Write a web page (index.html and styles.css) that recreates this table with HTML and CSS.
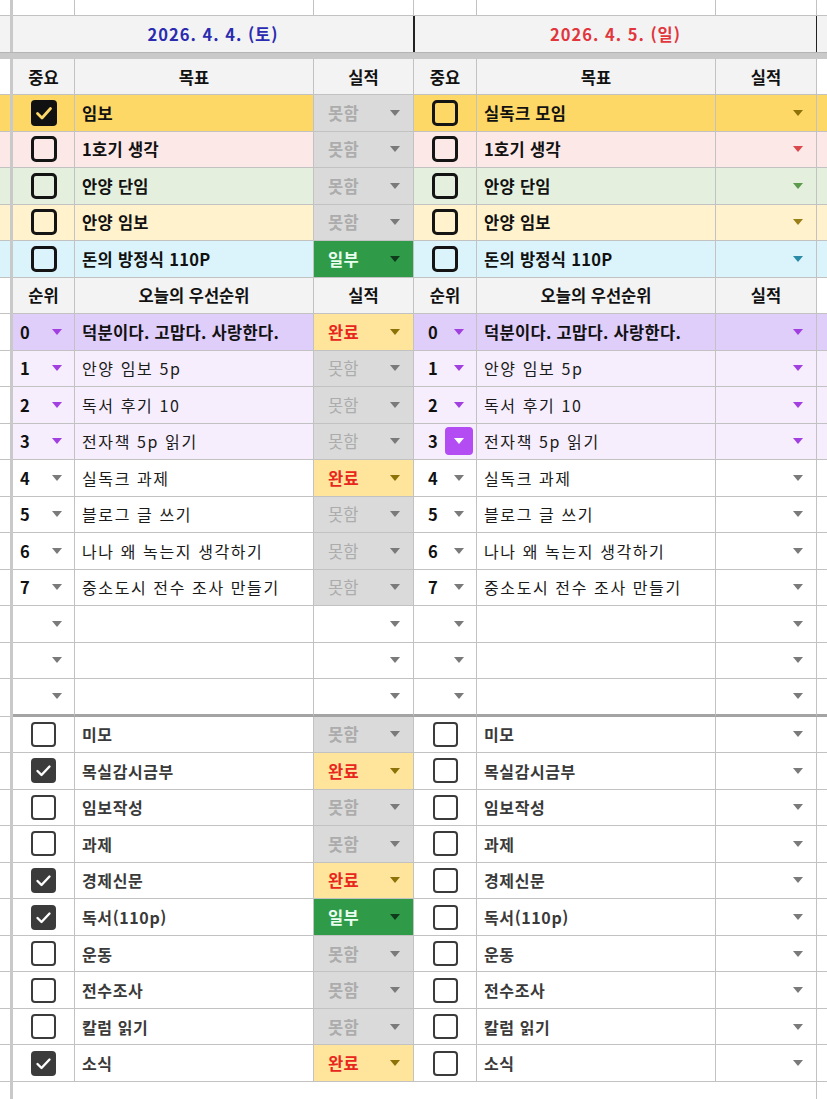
FILE: index.html
```html
<!DOCTYPE html>
<html lang="ko">
<head>
<meta charset="utf-8">
<link rel="stylesheet" href="styles.css">
<title>Planner</title>
</head>
<body>
<div class="sheet">
  <!-- top partial row -->
  <div class="c s"></div><div class="v"></div>
  <div class="c"></div><div class="c"></div><div class="c"></div><div class="c"></div><div class="c"></div><div class="c"></div><div class="c g"></div>

  <!-- date row -->
  <div class="c s dt"></div><div class="v"></div>
  <div class="c date sat">2026. 4. 4. (토)</div>
  <div class="c date sun">2026. 4. 5. (일)</div>
  <div class="c g dt"></div>

  <!-- frozen band -->
  <div class="band"></div>

  <!-- goal header -->
  <div class="c s"></div><div class="v"></div>
  <div class="c h">중요</div><div class="c h">목표</div><div class="c h">실적</div>
  <div class="c h">중요</div><div class="c h">목표</div><div class="c h">실적</div>
  <div class="c g"></div>

  <!-- goals -->
  <div class="c s ry"></div><div class="v"></div>
  <div class="c ck ry"><svg class="cbx" viewBox="0 0 26 26"><rect x="0" y="0" width="26" height="26" rx="4" fill="#111"/><path d="M6.5 13.5 L11 18 L19.5 8.5" fill="none" stroke="#fed867" stroke-width="2.8" stroke-linecap="round" stroke-linejoin="round"/></svg></div>
  <div class="c t b ry">임보</div>
  <div class="c st no b">못함<i class="ar"></i></div>
  <div class="c ck ry"><span class="cb"></span></div>
  <div class="c t b ry">실독크 모임</div>
  <div class="c st e ry"><i class="ar a-ol"></i></div>
  <div class="c g ry"></div>

  <div class="c s rp"></div><div class="v"></div>
  <div class="c ck rp"><span class="cb"></span></div>
  <div class="c t b rp">1호기 생각</div>
  <div class="c st no b">못함<i class="ar"></i></div>
  <div class="c ck rp"><span class="cb"></span></div>
  <div class="c t b rp">1호기 생각</div>
  <div class="c st e rp"><i class="ar a-red"></i></div>
  <div class="c g rp"></div>

  <div class="c s rg"></div><div class="v"></div>
  <div class="c ck rg"><span class="cb"></span></div>
  <div class="c t b rg">안양 단임</div>
  <div class="c st no b">못함<i class="ar"></i></div>
  <div class="c ck rg"><span class="cb"></span></div>
  <div class="c t b rg">안양 단임</div>
  <div class="c st e rg"><i class="ar a-grn"></i></div>
  <div class="c g rg"></div>

  <div class="c s rl"></div><div class="v"></div>
  <div class="c ck rl"><span class="cb"></span></div>
  <div class="c t b rl">안양 임보</div>
  <div class="c st no b">못함<i class="ar"></i></div>
  <div class="c ck rl"><span class="cb"></span></div>
  <div class="c t b rl">안양 임보</div>
  <div class="c st e rl"><i class="ar a-ol2"></i></div>
  <div class="c g rl"></div>

  <div class="c s rc"></div><div class="v"></div>
  <div class="c ck rc"><span class="cb"></span></div>
  <div class="c t b rc">돈의 방정식 110P</div>
  <div class="c st pt b">일부<i class="ar a-dk"></i></div>
  <div class="c ck rc"><span class="cb"></span></div>
  <div class="c t b rc">돈의 방정식 110P</div>
  <div class="c st e rc"><i class="ar a-cy"></i></div>
  <div class="c g rc"></div>

  <!-- priority header -->
  <div class="c s"></div><div class="v"></div>
  <div class="c h">순위</div><div class="c h">오늘의 우선순위</div><div class="c h">실적</div>
  <div class="c h">순위</div><div class="c h">오늘의 우선순위</div><div class="c h">실적</div>
  <div class="c g"></div>

  <!-- priorities -->
  <div class="c s"></div><div class="v"></div>
  <div class="c n lv0">0<i class="ar a-pu"></i></div>
  <div class="c t b lv0">덕분이다. 고맙다. 사랑한다.</div>
  <div class="c st ok b">완료<i class="ar a-ol"></i></div>
  <div class="c n nr lv0">0<i class="ar a-pu"></i></div>
  <div class="c t b lv0">덕분이다. 고맙다. 사랑한다.</div>
  <div class="c st e lv0"><i class="ar a-pu"></i></div>
  <div class="c g lv0"></div>

  <div class="c s"></div><div class="v"></div>
  <div class="c n lv1">1<i class="ar a-pu"></i></div>
  <div class="c t r lv1">안양 임보 5p</div>
  <div class="c st no">못함<i class="ar"></i></div>
  <div class="c n nr lv1">1<i class="ar a-pu"></i></div>
  <div class="c t r lv1">안양 임보 5p</div>
  <div class="c st e lv1"><i class="ar a-pu"></i></div>
  <div class="c g lv1"></div>

  <div class="c s"></div><div class="v"></div>
  <div class="c n lv1">2<i class="ar a-pu"></i></div>
  <div class="c t r lv1">독서 후기 10</div>
  <div class="c st no">못함<i class="ar"></i></div>
  <div class="c n nr lv1">2<i class="ar a-pu"></i></div>
  <div class="c t r lv1">독서 후기 10</div>
  <div class="c st e lv1"><i class="ar a-pu"></i></div>
  <div class="c g lv1"></div>

  <div class="c s"></div><div class="v"></div>
  <div class="c n lv1">3<i class="ar a-pu"></i></div>
  <div class="c t r lv1">전자책 5p 읽기</div>
  <div class="c st no">못함<i class="ar"></i></div>
  <div class="c n nr lv1">3<span class="chip"><i class="ar a-wh"></i></span></div>
  <div class="c t r lv1">전자책 5p 읽기</div>
  <div class="c st e lv1"><i class="ar a-pu"></i></div>
  <div class="c g lv1"></div>

  <div class="c s"></div><div class="v"></div>
  <div class="c n">4<i class="ar"></i></div>
  <div class="c t r">실독크 과제</div>
  <div class="c st ok b">완료<i class="ar a-ol"></i></div>
  <div class="c n nr">4<i class="ar"></i></div>
  <div class="c t r">실독크 과제</div>
  <div class="c st e"><i class="ar"></i></div>
  <div class="c g"></div>

  <div class="c s"></div><div class="v"></div>
  <div class="c n">5<i class="ar"></i></div>
  <div class="c t r">블로그 글 쓰기</div>
  <div class="c st no">못함<i class="ar"></i></div>
  <div class="c n nr">5<i class="ar"></i></div>
  <div class="c t r">블로그 글 쓰기</div>
  <div class="c st e"><i class="ar"></i></div>
  <div class="c g"></div>

  <div class="c s"></div><div class="v"></div>
  <div class="c n">6<i class="ar"></i></div>
  <div class="c t r">나나 왜 녹는지 생각하기</div>
  <div class="c st no">못함<i class="ar"></i></div>
  <div class="c n nr">6<i class="ar"></i></div>
  <div class="c t r">나나 왜 녹는지 생각하기</div>
  <div class="c st e"><i class="ar"></i></div>
  <div class="c g"></div>

  <div class="c s"></div><div class="v"></div>
  <div class="c n">7<i class="ar"></i></div>
  <div class="c t r">중소도시 전수 조사 만들기</div>
  <div class="c st no">못함<i class="ar"></i></div>
  <div class="c n nr">7<i class="ar"></i></div>
  <div class="c t r">중소도시 전수 조사 만들기</div>
  <div class="c st e"><i class="ar"></i></div>
  <div class="c g"></div>

  <div class="c s"></div><div class="v"></div>
  <div class="c n e"><i class="ar"></i></div>
  <div class="c t"></div>
  <div class="c st e"><i class="ar"></i></div>
  <div class="c n e"><i class="ar"></i></div>
  <div class="c t"></div>
  <div class="c st e"><i class="ar"></i></div>
  <div class="c g"></div>

  <div class="c s"></div><div class="v"></div>
  <div class="c n e"><i class="ar"></i></div>
  <div class="c t"></div>
  <div class="c st e"><i class="ar"></i></div>
  <div class="c n e"><i class="ar"></i></div>
  <div class="c t"></div>
  <div class="c st e"><i class="ar"></i></div>
  <div class="c g"></div>

  <div class="c s"></div><div class="v"></div>
  <div class="c n e k"><i class="ar"></i></div>
  <div class="c t k"></div>
  <div class="c st e k"><i class="ar"></i></div>
  <div class="c n e k"><i class="ar"></i></div>
  <div class="c t k"></div>
  <div class="c st e k"><i class="ar"></i></div>
  <div class="c g k"></div>

  <!-- habits -->
  <div class="c s"></div><div class="v"></div>
  <div class="c ck"><span class="cb2"></span></div>
  <div class="c t m">미모</div>
  <div class="c st no b">못함<i class="ar"></i></div>
  <div class="c ck"><span class="cb2"></span></div>
  <div class="c t m">미모</div>
  <div class="c st e"><i class="ar"></i></div>
  <div class="c g"></div>

  <div class="c s"></div><div class="v"></div>
  <div class="c ck"><svg class="cbx2" viewBox="0 0 25 25"><rect width="25" height="25" rx="4" fill="#3b3b3b"/><path d="M6.5 13 L10.5 17 L18.5 8.5" fill="none" stroke="#fff" stroke-width="2.4" stroke-linecap="round" stroke-linejoin="round"/></svg></div>
  <div class="c t m">목실감시금부</div>
  <div class="c st ok b">완료<i class="ar a-ol"></i></div>
  <div class="c ck"><span class="cb2"></span></div>
  <div class="c t m">목실감시금부</div>
  <div class="c st e"><i class="ar"></i></div>
  <div class="c g"></div>

  <div class="c s"></div><div class="v"></div>
  <div class="c ck"><span class="cb2"></span></div>
  <div class="c t m">임보작성</div>
  <div class="c st no b">못함<i class="ar"></i></div>
  <div class="c ck"><span class="cb2"></span></div>
  <div class="c t m">임보작성</div>
  <div class="c st e"><i class="ar"></i></div>
  <div class="c g"></div>

  <div class="c s"></div><div class="v"></div>
  <div class="c ck"><span class="cb2"></span></div>
  <div class="c t m">과제</div>
  <div class="c st no b">못함<i class="ar"></i></div>
  <div class="c ck"><span class="cb2"></span></div>
  <div class="c t m">과제</div>
  <div class="c st e"><i class="ar"></i></div>
  <div class="c g"></div>

  <div class="c s"></div><div class="v"></div>
  <div class="c ck"><svg class="cbx2" viewBox="0 0 25 25"><rect width="25" height="25" rx="4" fill="#3b3b3b"/><path d="M6.5 13 L10.5 17 L18.5 8.5" fill="none" stroke="#fff" stroke-width="2.4" stroke-linecap="round" stroke-linejoin="round"/></svg></div>
  <div class="c t m">경제신문</div>
  <div class="c st ok b">완료<i class="ar a-ol"></i></div>
  <div class="c ck"><span class="cb2"></span></div>
  <div class="c t m">경제신문</div>
  <div class="c st e"><i class="ar"></i></div>
  <div class="c g"></div>

  <div class="c s"></div><div class="v"></div>
  <div class="c ck"><svg class="cbx2" viewBox="0 0 25 25"><rect width="25" height="25" rx="4" fill="#3b3b3b"/><path d="M6.5 13 L10.5 17 L18.5 8.5" fill="none" stroke="#fff" stroke-width="2.4" stroke-linecap="round" stroke-linejoin="round"/></svg></div>
  <div class="c t m">독서(110p)</div>
  <div class="c st pt b">일부<i class="ar a-dk"></i></div>
  <div class="c ck"><span class="cb2"></span></div>
  <div class="c t m">독서(110p)</div>
  <div class="c st e"><i class="ar"></i></div>
  <div class="c g"></div>

  <div class="c s"></div><div class="v"></div>
  <div class="c ck"><span class="cb2"></span></div>
  <div class="c t m">운동</div>
  <div class="c st no b">못함<i class="ar"></i></div>
  <div class="c ck"><span class="cb2"></span></div>
  <div class="c t m">운동</div>
  <div class="c st e"><i class="ar"></i></div>
  <div class="c g"></div>

  <div class="c s"></div><div class="v"></div>
  <div class="c ck"><span class="cb2"></span></div>
  <div class="c t m">전수조사</div>
  <div class="c st no b">못함<i class="ar"></i></div>
  <div class="c ck"><span class="cb2"></span></div>
  <div class="c t m">전수조사</div>
  <div class="c st e"><i class="ar"></i></div>
  <div class="c g"></div>

  <div class="c s"></div><div class="v"></div>
  <div class="c ck"><span class="cb2"></span></div>
  <div class="c t m">칼럼 읽기</div>
  <div class="c st no b">못함<i class="ar"></i></div>
  <div class="c ck"><span class="cb2"></span></div>
  <div class="c t m">칼럼 읽기</div>
  <div class="c st e"><i class="ar"></i></div>
  <div class="c g"></div>

  <div class="c s"></div><div class="v"></div>
  <div class="c ck"><svg class="cbx2" viewBox="0 0 25 25"><rect width="25" height="25" rx="4" fill="#3b3b3b"/><path d="M6.5 13 L10.5 17 L18.5 8.5" fill="none" stroke="#fff" stroke-width="2.4" stroke-linecap="round" stroke-linejoin="round"/></svg></div>
  <div class="c t m">소식</div>
  <div class="c st ok b">완료<i class="ar a-ol"></i></div>
  <div class="c ck"><span class="cb2"></span></div>
  <div class="c t m">소식</div>
  <div class="c st e"><i class="ar"></i></div>
  <div class="c g"></div>

  <!-- bottom partial row -->
  <div class="c s nb"></div><div class="v"></div>
  <div class="c last"></div>
  <div class="c g nb"></div>
</div>
</body>
</html>
```

FILE: styles.css
```css
html, body {
  margin: 0;
  padding: 0;
  background: #ffffff;
  overflow: hidden;
}

body {
  font-family: "Noto Sans CJK KR", "Noto Sans", sans-serif;
  color: #111;
}

.sheet {
  display: grid;
  width: 827px;
  grid-template-columns: 10px 3px 62px 239px 100px 63px 239px 101px 10px;
  grid-template-rows: 16px 36px 7px 36px repeat(16, 36.5px) 37.5px repeat(10, 36.55px) 30px;
}

.c {
  box-sizing: border-box;
  border-right: 1px solid #c2c2c2;
  border-bottom: 1px solid #c2c2c2;
  display: flex;
  align-items: center;
  min-width: 0;
  overflow: hidden;
  white-space: nowrap;
  font-size: 16px;
}

.s { border-right: none; }
.g { border-right: none; }
.nb { border-bottom: none; }
.v { background: #c9c9c9; }

.band {
  grid-column: 1 / -1;
  background: #c9c9c9;
  border-top: 1px solid #b5b5b5;
  box-sizing: border-box;
}

.dt { background: #f3f3f3; border-bottom: none; }

.date {
  grid-column: span 3;
  justify-content: center;
  background: #f3f3f3;
  border-bottom: none;
  font-size: 16.5px;
  font-weight: 700;
  letter-spacing: 1px;
}
.date.sat { color: #2b2bb0; border-right: 1px solid #222; }
.date.sun { color: #e0363c; border-left: 1px solid #222; border-right: 1px solid #222; }

.h {
  background: #f3f3f3;
  justify-content: center;
  font-weight: 700;
  font-size: 16.5px;
}

.t { padding-left: 7px; }
.b { font-weight: 700; font-size: 16.5px; letter-spacing: 0.3px; }
.r { font-weight: 400; font-size: 16px; letter-spacing: 1.6px; color: #1a1a1a; }
.m { font-weight: 700; font-size: 16px; letter-spacing: 0.6px; color: #3a3a3a; }

.ck { justify-content: center; }

.cb {
  width: 26px;
  height: 26px;
  box-sizing: border-box;
  border: 3px solid #141414;
  border-radius: 5px;
}
.cbx { width: 26px; height: 26px; display: block; }

.cb2 {
  width: 25px;
  height: 25px;
  box-sizing: border-box;
  border: 2.6px solid #3b3b3b;
  border-radius: 4px;
}
.cbx2 { width: 25px; height: 25px; display: block; }

.st {
  justify-content: space-between;
  padding: 0 13px 0 14px;
  font-size: 16.5px;
}
.st.e { justify-content: flex-end; }

.no { background: #dadada; color: #acacac; }
.ok { background: #ffe59c; color: #e8261d; }
.pt { background: #2f9b48; color: #eafff0; }

.n {
  justify-content: space-between;
  padding: 0 12px 0 7px;
  font-weight: 700;
  font-size: 16.5px;
}
.n.nr { padding-left: 14px; }
.n.e { justify-content: flex-end; }

.k { border-bottom: 3px solid #a4a4a4; }

.last {
  grid-column: 3 / 9;
  border-bottom: none;
}

/* row colors */
.ry { background: #fed867; }
.rp { background: #fde8e8; }
.rg { background: #e4f0dd; }
.rl { background: #fff2cc; }
.rc { background: #dbf4fb; }
.lv0 { background: #dfcdfa; }
.lv1 { background: #f6eefd; }

/* dropdown arrows */
.ar {
  display: block;
  width: 0;
  height: 0;
  border-left: 5.5px solid transparent;
  border-right: 5.5px solid transparent;
  border-top: 6px solid #7a7a7a;
}
.a-pu { border-top-color: #a23fe0; }
.a-ol { border-top-color: #8d7208; }
.a-ol2 { border-top-color: #9a7e18; }
.a-dk { border-top-color: #0f3a1b; }
.a-red { border-top-color: #d9484a; }
.a-grn { border-top-color: #5c9a4c; }
.a-cy { border-top-color: #2a8ba6; }
.a-wh { border-top-color: #ffffff; }

.chip {
  width: 28px;
  height: 28px;
  margin-right: -8.5px;
  background: #b34cf2;
  border-radius: 4px;
  display: flex;
  align-items: center;
  justify-content: center;
}
```
